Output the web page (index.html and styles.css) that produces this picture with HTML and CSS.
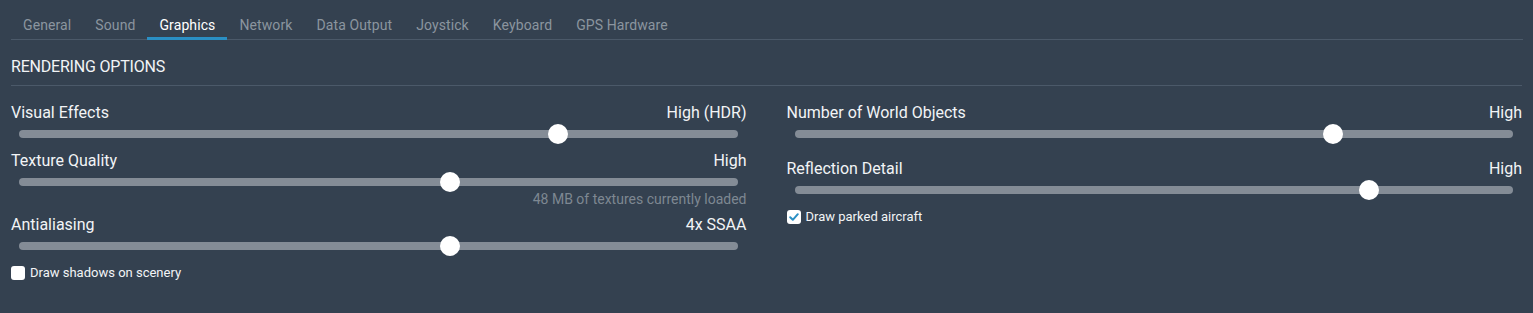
FILE: index.html
```html
<!DOCTYPE html>
<html lang="en">
<head>
    <meta charset="UTF-8">
    <meta name="viewport" content="width=device-width, initial-scale=1.0">
    <title>Settings - Graphics</title>
    <link rel="stylesheet" href="styles.css">
</head>
<body>

<nav class="tabs">
    <span class="tab">General</span>
    <span class="tab">Sound</span>
    <span class="tab active">Graphics</span>
    <span class="tab">Network</span>
    <span class="tab">Data Output</span>
    <span class="tab">Joystick</span>
    <span class="tab">Keyboard</span>
    <span class="tab">GPS Hardware</span>
</nav>

<main>
    <h2 class="section-title">RENDERING OPTIONS</h2>

    <div class="columns">
        <section class="column">
            <div class="setting">
                <div class="setting-head">
                    <span>Visual Effects</span>
                    <span>High (HDR)</span>
                </div>
                <div class="slider"><div class="track"><span class="thumb" style="left: 75%"></span></div></div>
            </div>

            <div class="setting">
                <div class="setting-head">
                    <span>Texture Quality</span>
                    <span>High</span>
                </div>
                <div class="slider"><div class="track"><span class="thumb" style="left: 60%"></span></div></div>
                <p class="note">48 MB of textures currently loaded</p>
            </div>

            <div class="setting">
                <div class="setting-head">
                    <span>Antialiasing</span>
                    <span>4x SSAA</span>
                </div>
                <div class="slider"><div class="track"><span class="thumb" style="left: 60%"></span></div></div>
            </div>

            <label class="check">
                <span class="box"></span>
                Draw shadows on scenery
            </label>
        </section>

        <section class="column">
            <div class="setting">
                <div class="setting-head">
                    <span>Number of World Objects</span>
                    <span>High</span>
                </div>
                <div class="slider"><div class="track"><span class="thumb" style="left: 75%"></span></div></div>
            </div>

            <div class="setting spaced">
                <div class="setting-head">
                    <span>Reflection Detail</span>
                    <span>High</span>
                </div>
                <div class="slider"><div class="track"><span class="thumb" style="left: 80%"></span></div></div>
            </div>

            <label class="check">
                <span class="box checked">
                    <svg viewBox="0 0 14 14" width="14" height="14"><path d="M3.2 7.3 L5.8 9.8 L10.8 4.2" fill="none" stroke="#2a8fc4" stroke-width="2" stroke-linecap="round" stroke-linejoin="round"/></svg>
                </span>
                Draw parked aircraft
            </label>
        </section>
    </div>
</main>

</body>
</html>
```

FILE: styles.css
```css
body {
    font-family: Roboto, "Liberation Sans", sans-serif;
    margin: 0;
    padding: 0;
    background-color: #344150;
    color: #f2f4f6;
    height: 313px;
    overflow: hidden;
}
.tabs {
    display: flex;
    margin: 0 10px 0 11px;
    border-bottom: 1px solid #4b5969;
}
.tab {
    font-size: 14px;
    line-height: 20px;
    letter-spacing: 0.1px;
    color: #8b959f;
    padding: 15px 12px 2px;
    border-bottom: 3px solid transparent;
    margin-bottom: -1px;
}
.tab.active {
    color: #ffffff;
    border-bottom-color: #2a8fc4;
}
main {
    padding: 0 11px;
}
.section-title {
    font-size: 16px;
    font-weight: 400;
    line-height: 20px;
    margin: 17px 0 0;
    padding-bottom: 8px;
    border-bottom: 1px solid #4b5969;
    letter-spacing: -0.2px;
}
.columns {
    display: grid;
    grid-template-columns: 1fr 1fr;
    column-gap: 40px;
    margin-top: 17px;
}
.setting {
    margin-bottom: 6px;
}
.setting.spaced {
    margin-top: 14px;
}
.setting-head {
    display: flex;
    justify-content: space-between;
    font-size: 16px;
    line-height: 20px;
}
.slider {
    height: 22px;
    display: flex;
    align-items: center;
    padding: 0 9px 0 8px;
}
.track {
    position: relative;
    flex: 1;
    height: 8px;
    border-radius: 4px;
    background-color: #848c96;
}
.thumb {
    position: absolute;
    top: 50%;
    width: 20px;
    height: 20px;
    border-radius: 50%;
    background-color: #ffffff;
    transform: translate(-50%, -50%);
}
.note {
    margin: -2px 0 8px;
    text-align: right;
    font-size: 14px;
    line-height: 16px;
    color: #7e8892;
}
.check {
    display: flex;
    align-items: center;
    gap: 5px;
    margin-top: 8px;
    font-size: 13px;
    line-height: 16px;
}
.box {
    width: 14px;
    height: 14px;
    border-radius: 3px;
    background-color: #ffffff;
    display: flex;
}
```
